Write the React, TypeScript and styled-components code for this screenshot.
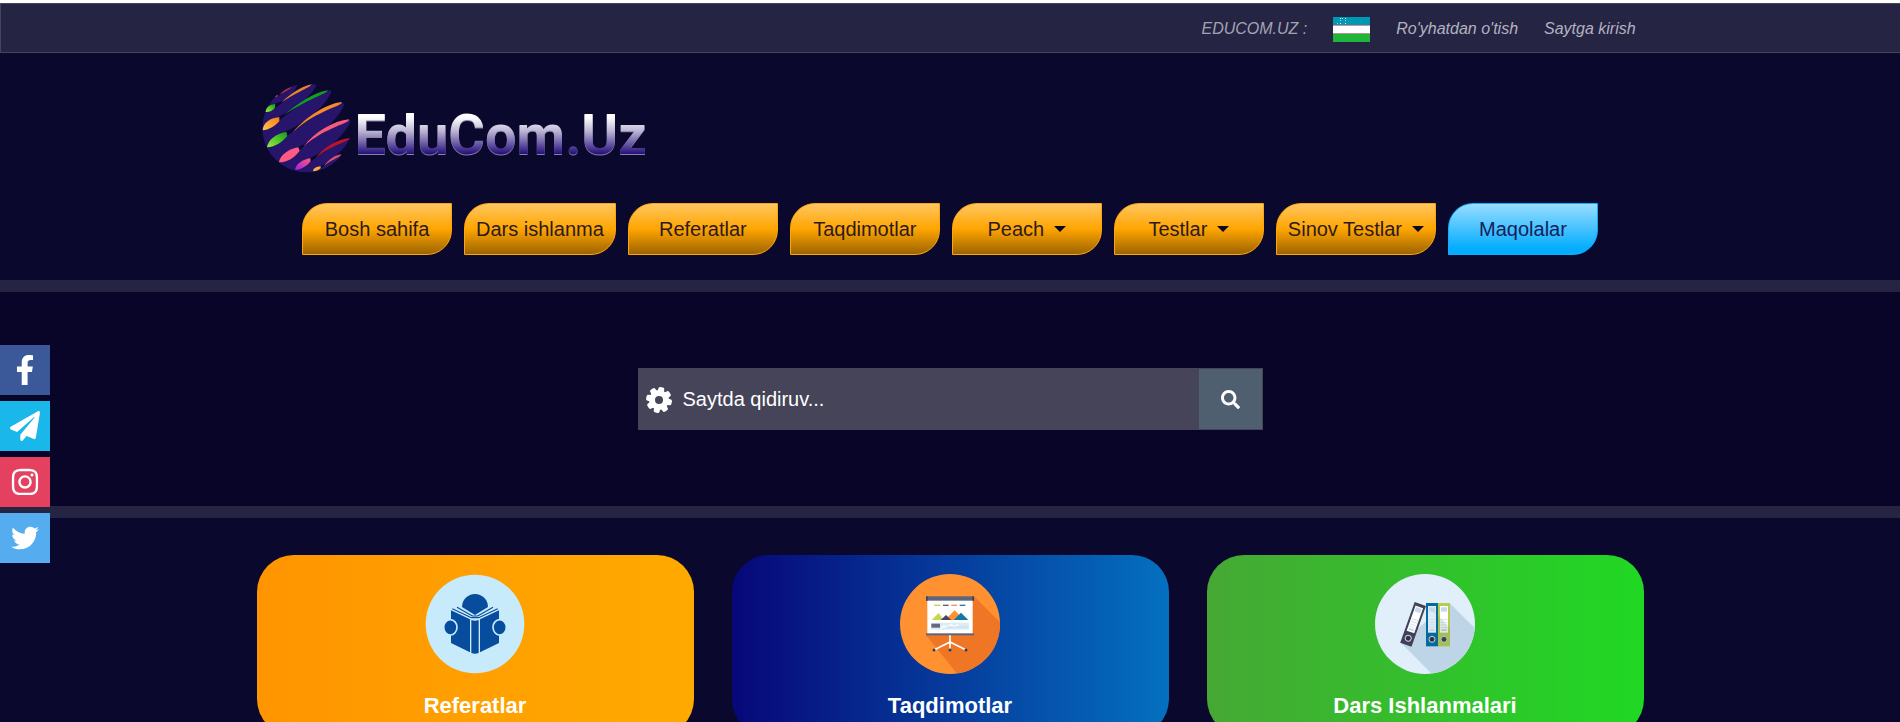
import React from 'react';
import styled, { createGlobalStyle } from 'styled-components';
import { FaFacebookF, FaInstagram, FaPaperPlane, FaSearch, FaTwitter } from 'react-icons/fa';

const GlobalStyle = createGlobalStyle`
  *, *::before, *::after { box-sizing: border-box; }
  html { scrollbar-width: none; }
  body {
    margin: 0;
    background: #0a082c;
    font-family: "Liberation Sans", Arial, sans-serif;
    font-size: 16px;
    color: #fff;
  }
`;

const TopBar = styled.div`
  margin-top: 3px;
  height: 50px;
  border: 1px solid #45445b;
  border-right: 0;
  background: #262443;
`;

const PageTop = styled.div`
  display: flow-root;
  background: linear-gradient(#fff 3px, transparent 3px);
`;

const TopBarInner = styled.div`
  width: 73%;
  height: 100%;
  margin: 0 auto;
  padding: 2px 8px 0;
  display: flex;
  align-items: center;
  justify-content: flex-end;
  gap: 26px;
  font-style: italic;
`;

const Ticker = styled.span`
  white-space: nowrap;
  color: #a3a2b3;
`;

const FlagLink = styled.a`
  display: flex;
`;

const TopLink = styled.a`
  color: #b3b2c1;
  text-decoration: none;
`;

const Header = styled.header`
  padding: 30px 0 25px;
`;

const LogoRow = styled.a`
  width: 73%;
  margin: 0 auto;
  padding-left: 5px;
  display: flex;
  align-items: center;
  gap: 4px;
  text-decoration: none;
`;

const LogoText = styled.span`
  padding-top: 14px;
  font-family: Roboto, "Liberation Sans", sans-serif;
  font-size: 56px;
  line-height: 76px;
  font-weight: 700;
  color: transparent;
  background: linear-gradient(#fff 38%, #b9b2d2 54%, #5a489c 70%, #1b0873 80%);
  background-clip: text;
  filter: drop-shadow(0 1px 0 rgba(190, 182, 220, 0.7));
`;

const NavList = styled.ul`
  margin: 30px 0 0;
  padding: 0;
  list-style: none;
  display: flex;
  flex-wrap: wrap;
  justify-content: center;
  gap: 12px;
`;

const NavLink = styled.a<{ $active?: boolean }>`
  display: flex;
  align-items: center;
  justify-content: center;
  gap: 10px;
  min-width: 150px;
  height: 52px;
  padding: 0 11px;
  border: 1px solid ${(p) => (p.$active ? '#0ab0ff' : '#ffa50a')};
  border-radius: 25px 0 25px 0;
  background: ${(p) =>
    p.$active
      ? 'linear-gradient(#98ddff, #05adff 88%)'
      : 'linear-gradient(#ffc65f, #ffa500 50%, #9c6400)'};
  color: ${(p) => (p.$active ? '#14205a' : '#2b1a20')};
  font-size: 20px;
  line-height: 24px;
  text-decoration: none;
`;

const Caret = styled.span`
  border: 6px solid transparent;
  border-top-color: #09072b;
  border-bottom: 0;
`;

const SearchSection = styled.section`
  padding: 76px 0;
  border-top: 12px solid #262443;
  border-bottom: 12px solid #262443;
  background: #080528;
  display: flex;
  justify-content: center;
`;

const SearchForm = styled.form`
  width: 625px;
  max-width: 90%;
  height: 62px;
  padding: 1px;
  display: flex;
  align-items: center;
  background: #454459;
`;

const SearchInput = styled.input`
  flex: 1;
  min-width: 0;
  height: 100%;
  padding: 0 10px;
  border: 0;
  outline: 0;
  background: transparent;
  color: #fff;
  font: 20px "Liberation Sans", Arial, sans-serif;
  &::placeholder { color: #fff; opacity: 1; }
`;

const SearchButton = styled.button`
  width: 63px;
  height: 100%;
  padding: 0;
  border: 0;
  background: #4f5f6f;
  color: #fff;
  font-size: 19px;
  display: flex;
  align-items: center;
  justify-content: center;
`;

const GearBox = styled.span`
  display: flex;
  padding: 2px 0 0 6px;
`;

const Cards = styled.main`
  width: 73%;
  margin: 0 auto;
  padding: 37px 0 60px;
  display: grid;
  grid-template-columns: repeat(3, 1fr);
  gap: 38px;
`;

const Card = styled.a<{ $from: string; $to: string }>`
  min-height: 181px;
  padding: 19px 0 12px;
  border-radius: 37px;
  background: linear-gradient(90deg, ${(p) => p.$from}, ${(p) => p.$to});
  display: flex;
  flex-direction: column;
  align-items: center;
  color: #fff;
  text-decoration: none;
`;

const CardTitle = styled.h2`
  margin: 18px 0 0;
  font-size: 22px;
  line-height: 28px;
  font-weight: 700;
`;

const Social = styled.nav`
  position: fixed;
  left: 0;
  top: 345px;
  display: flex;
  flex-direction: column;
  gap: 6px;
`;

const SocialLink = styled.a<{ $bg: string }>`
  width: 50px;
  height: 50px;
  display: flex;
  align-items: center;
  justify-content: center;
  background: ${(p) => p.$bg};
  color: #fff;
  font-size: 30px;
`;

const Flag = () => (
  <svg width="37" height="25" viewBox="0 0 37 25" aria-label="O'zbekcha">
    <rect width="37" height="25" fill="#fff" />
    <rect width="37" height="8" fill="#0099b5" />
    <rect y="8" width="37" height="1" fill="#e08a94" />
    <rect y="16" width="37" height="1" fill="#b98f80" />
    <rect y="17" width="37" height="8" fill="#1eb53a" />
    <g fill="#fff">
      <rect x="7" y="1" width="1" height="1" />
      <rect x="9" y="1" width="1" height="1" opacity=".6" />
      <rect x="12" y="1" width="1" height="1" />
      <rect x="7" y="3" width="1" height="1" opacity=".6" />
      <rect x="12" y="3" width="1" height="1" opacity=".6" />
      <rect x="4" y="6" width="1" height="1" opacity=".6" />
      <rect x="7" y="6" width="1" height="1" />
      <rect x="12" y="6" width="1" height="1" />
    </g>
  </svg>
);

const Globe = () => (
  <svg width="89" height="90" viewBox="36 38 267 270" aria-hidden="true">
    <defs>
      <linearGradient id="leaf" x1="0" y1="1" x2="1" y2="0">
        <stop offset="0" stopColor="#9af03c" />
        <stop offset="1" stopColor="#0d9a1c" />
      </linearGradient>
      <linearGradient id="sun" x1="0" y1="1" x2="1" y2="0">
        <stop offset="0" stopColor="#ffc84a" />
        <stop offset="1" stopColor="#f77a1c" />
      </linearGradient>
      <linearGradient id="violet" x1="0" y1="1" x2="1" y2="0">
        <stop offset="0" stopColor="#a01ee0" />
        <stop offset="1" stopColor="#ff5c7c" />
      </linearGradient>
    </defs>
    <circle cx="170" cy="173" r="133" fill="#26156a" />
    <g fill="#0a082c">
      <path d="M30 90L75 80C95 74 122 56 128 46L110 30H30Z" />
      <path d="M40 108L76 100C105 92 134 68 141 46L145 30L190 34L184 43C150 52 120 76 78 112L60 120Z" />
      <path d="M72 146L88 138C130 118 186 78 198 46L202 30L250 50L233 62C190 72 140 112 90 148Z" />
      <path d="M92 194L108 183C156 162 226 112 244 64L254 50L296 88L274 97C230 108 170 150 112 196Z" />
      <path d="M132 244L144 231C192 208 262 156 284 100L292 90L316 142L297 149C250 160 195 198 146 242Z" />
      <path d="M168 274L181 263C228 242 280 200 301 156L314 150L316 198L299 205C262 214 220 246 182 274Z" />
      <path d="M202 296L212 288C240 276 280 242 297 210L314 204L290 256L273 254C254 260 236 276 212 295Z" />
    </g>
    <path d="M47 125C47 112 58 102 76 101L75 112C68 121 58 126 47 125Z" fill="url(#leaf)" />
    <path d="M38 180C39 158 58 144 88 140L88 153C74 168 56 179 38 180Z" fill="url(#sun)" />
    <path d="M51 231C54 208 78 190 109 184L112 197C98 214 76 230 51 231Z" fill="url(#leaf)" />
    <path d="M87 276C90 254 116 236 145 231L149 241C134 262 112 276 87 276Z" fill="#ff5a84" />
    <path d="M135 299C138 280 158 268 181 264L182 273C170 288 154 298 135 299Z" fill="url(#violet)" />
    <path d="M189 303C190 293 200 289 212 288L212 294C206 300 198 303 189 303Z" fill="#ffa93a" />
    <path d="M75 81Q78 74 85 74Q82 81 75 81Z" fill="#e83c62" />
    <path d="M88 73C98 62 112 52 126 49C122 55 106 65 88 73Z" fill="#b52d5d" />
    <path d="M95 96C120 72 150 50 184 42C186 49 140 66 95 96Z" fill="#e88330" />
    <path d="M100 137C140 102 190 66 233 60C236 69 170 86 100 137Z" fill="#109f20" />
    <path d="M130 184C170 138 230 100 275 95C282 107 202 118 130 184Z" fill="#f78a2a" />
    <path d="M160 229C195 184 250 152 297 147C301 160 230 168 160 229Z" fill="#f65a7c" />
    <path d="M196 264C220 232 262 206 299 203C299 215 248 220 196 264Z" fill="#b8142d" />
    <path d="M222 287C236 268 254 254 274 252C273 261 248 266 222 287Z" fill="#d8506e" />
  </svg>
);

const Gear = () => (
  <svg width="28" height="28" viewBox="-14 -14 28 28" aria-hidden="true">
    <g fill="#fff" transform="rotate(12)">
      {[0, 45, 90, 135, 180, 225, 270, 315].map((a) => (
        <path key={a} d="M-3.4-8L-2.8-12.2Q-2.6-13 0-13Q2.6-13 2.8-12.2L3.4-8Z" transform={`rotate(${a})`} />
      ))}
    </g>
    <circle r="7" fill="none" stroke="#fff" strokeWidth="6" />
  </svg>
);

const ReaderIcon = () => (
  <svg width="100" height="100" viewBox="552 222 300 300" aria-hidden="true">
    <circle cx="702" cy="372" r="148" fill="#c8ebfb" />
    <g fill="#084c9e">
      <path d="M663 321A39 39 0 0 1 741 321L702 345Z" />
      <path d="M630 331L687 358V457L630 429Z" />
      <path d="M774 331L717 358V457L774 429Z" />
      <path d="M691 360Q702 365 713 360V459Q702 464 691 459Z" />
    </g>
    <g fill="none" stroke="#084c9e" strokeWidth="3.5">
      <path d="M634 326L691 353H713L770 326" />
      <path d="M648 322L694 348H710L756 322" />
    </g>
    <g fill="#084c9e" stroke="#c8ebfb" strokeWidth="5">
      <ellipse cx="628" cy="382" rx="20" ry="23" />
      <ellipse cx="776" cy="382" rx="20" ry="23" />
    </g>
  </svg>
);

const BoardIcon = () => (
  <svg width="100" height="100" viewBox="537 222 300 300" aria-hidden="true">
    <clipPath id="boardClip"><circle cx="687" cy="372" r="150" /></clipPath>
    <circle cx="687" cy="372" r="150" fill="#ff9131" />
    <path clipPath="url(#boardClip)" d="M759 289L860 390V560L740 560L615 406Z" fill="#ee7625" />
    <rect x="619" y="300" width="136" height="102" fill="#fff" />
    <rect x="615" y="289" width="144" height="13" fill="#5e6578" />
    <rect x="615" y="289" width="5" height="13" fill="#3c4358" />
    <rect x="754" y="289" width="5" height="13" fill="#3c4358" />
    <rect x="615" y="400" width="144" height="6" fill="#5e6578" />
    <g>
      <rect x="640" y="314" width="18" height="4" fill="#c0d144" />
      <rect x="666" y="314" width="17" height="4" fill="#5d5f78" />
      <rect x="691" y="314" width="17" height="4" fill="#f79152" />
      <rect x="716" y="314" width="17" height="4" fill="#1f7aad" />
      <path d="M632 360L653 339L668 360Z" fill="#c5d84b" />
      <path d="M680 360L680 352L701 331L716 346L702 360Z" fill="#ff9131" />
      <path d="M659 360L675 345L691 360Z" fill="#464560" />
      <path d="M698 360L720 338L742 360Z" fill="#1277a8" />
      <rect x="630" y="368" width="114" height="21" fill="#dcebf5" />
      <rect x="631" y="371" width="26" height="12" fill="#64677e" />
      <path d="M660 386L668 378L676 382L690 374L700 380L712 374" stroke="#fff" strokeWidth="4" fill="none" />
      <rect x="676" y="380" width="66" height="3" fill="#c5dcea" />
    </g>
    <path d="M687 406V446M687 426L640 449M687 426L734 449" stroke="#fff" strokeWidth="5" fill="none" />
    <g fill="#343b55">
      <circle cx="639" cy="450" r="4.5" />
      <circle cx="687" cy="450" r="4.5" />
      <circle cx="735" cy="450" r="4.5" />
    </g>
  </svg>
);

const Binder = ({ color, sheet }: { color: string; sheet: string }) => (
  <>
    <rect width="36" height="130" fill={color} />
    <rect x="6" y="9" width="24" height="80" fill={sheet} />
    <rect x="9" y="13" width="18" height="13" fill="#c3dbeb" />
    <path d="M8 50H28M8 58H28M8 66H28M8 74H28" stroke="#cfe1ed" strokeWidth="3" />
    <rect x="10" y="79" width="16" height="5" fill="#b5d5e8" />
    <circle cx="18" cy="109" r="9" fill="#33324a" stroke="#cbd5df" strokeWidth="3" />
  </>
);

const BindersIcon = () => (
  <svg width="100" height="100" viewBox="555 222 300 300" aria-hidden="true">
    <clipPath id="bindersClip"><circle cx="705" cy="372" r="150" /></clipPath>
    <circle cx="705" cy="372" r="150" fill="#e1effa" />
    <path clipPath="url(#bindersClip)" d="M779 309L870 400V560H764L631 427Z" fill="#bed5e8" />
    <g transform="translate(674 306) rotate(19.5)"><Binder color="#414059" sheet="#fff" /></g>
    <g transform="translate(708 309)"><Binder color="#066a9f" sheet="#dcebf6" /></g>
    <g transform="translate(744 309)"><Binder color="#b9cc4f" sheet="#fff" /></g>
    <path d="M708 309L780 385V439H744V351Z" fill="#5e8a60" opacity=".2" />
  </svg>
);

const navItems: { label: string; menu?: boolean; active?: boolean }[] = [
  { label: 'Bosh sahifa' },
  { label: 'Dars ishlanma' },
  { label: 'Referatlar' },
  { label: 'Taqdimotlar' },
  { label: 'Peach', menu: true },
  { label: 'Testlar', menu: true },
  { label: 'Sinov Testlar', menu: true },
  { label: 'Maqolalar', active: true },
];

const cards = [
  { title: 'Referatlar', from: '#ff9500', to: '#ffaa00', icon: <ReaderIcon /> },
  { title: 'Taqdimotlar', from: '#070778', to: '#0470c0', icon: <BoardIcon /> },
  { title: 'Dars Ishlanmalari', from: '#46a834', to: '#20d824', icon: <BindersIcon /> },
];

const socials = [
  { name: 'Facebook', bg: '#3b5998', icon: <FaFacebookF /> },
  { name: 'Telegram', bg: '#1ab7ea', icon: <FaPaperPlane /> },
  { name: 'Instagram', bg: '#e4405f', icon: <FaInstagram /> },
  { name: 'Twitter', bg: '#55acee', icon: <FaTwitter size={28} /> },
];

export default function App() {
  return (
    <>
      <GlobalStyle />
      <PageTop>
        <TopBar>
          <TopBarInner>
            <Ticker>EDUCOM.UZ :</Ticker>
            <FlagLink href="#"><Flag /></FlagLink>
            <TopLink href="#">Ro'yhatdan o'tish</TopLink>
            <TopLink href="#">Saytga kirish</TopLink>
          </TopBarInner>
        </TopBar>
      </PageTop>
      <Header>
        <LogoRow href="#">
          <Globe />
          <LogoText>EduCom.Uz</LogoText>
        </LogoRow>
        <nav>
          <NavList>
            {navItems.map((item) => (
              <li key={item.label}>
                <NavLink href="#" $active={item.active}>
                  {item.label}
                  {item.menu && <Caret />}
                </NavLink>
              </li>
            ))}
          </NavList>
        </nav>
      </Header>
      <SearchSection>
        <SearchForm role="search">
          <GearBox><Gear /></GearBox>
          <SearchInput type="text" aria-label="Saytda qidiruv" placeholder="Saytda qidiruv..." />
          <SearchButton type="button" aria-label="Qidirish"><FaSearch /></SearchButton>
        </SearchForm>
      </SearchSection>
      <Cards>
        {cards.map((card) => (
          <Card key={card.title} href="#" $from={card.from} $to={card.to}>
            {card.icon}
            <CardTitle>{card.title}</CardTitle>
          </Card>
        ))}
      </Cards>
      <Social>
        {socials.map((s) => (
          <SocialLink key={s.name} href="#" aria-label={s.name} $bg={s.bg}>{s.icon}</SocialLink>
        ))}
      </Social>
    </>
  );
}
